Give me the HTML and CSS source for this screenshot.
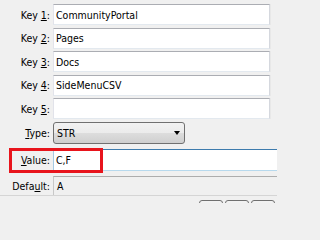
FILE: index.html
```html
<!DOCTYPE html>
<html>
<head>
<meta charset="utf-8">
<link rel="stylesheet" href="styles.css">
</head>
<body>
<div class="dialog">
  <div class="form">
    <div class="row">
      <div class="label">Key <u>1</u>:</div>
      <div class="field">CommunityPortal</div>
    </div>
    <div class="row">
      <div class="label">Key <u>2</u>:</div>
      <div class="field">Pages</div>
    </div>
    <div class="row">
      <div class="label">Key <u>3</u>:</div>
      <div class="field">Docs</div>
    </div>
    <div class="row">
      <div class="label">Key <u>4</u>:</div>
      <div class="field">SideMenuCSV</div>
    </div>
    <div class="row">
      <div class="label">Key <u>5</u>:</div>
      <div class="field"></div>
    </div>
    <div class="row row-type">
      <div class="label"><u>T</u>ype:</div>
      <div class="select">
        <span class="select-text">STR</span>
        <span class="arrow"></span>
      </div>
    </div>
    <div class="row row-value">
      <div class="label"><u>V</u>alue:</div>
      <div class="field field-focus">C,F</div>
    </div>
    <div class="row row-default">
      <div class="label">Defa<u>u</u>lt:</div>
      <div class="field field-readonly">A</div>
    </div>
  </div>
  <div class="footer">
    <div class="btn"></div>
    <div class="btn"></div>
    <div class="btn"></div>
  </div>
  <div class="highlight"></div>
</div>
</body>
</html>
```

FILE: styles.css
```css
html, body {
  margin: 0;
  padding: 0;
  background: #f0f0f0;
  overflow: hidden;
}

.dialog {
  position: relative;
  width: 277px;
  height: 203px;
  font-family: "DejaVu Sans Condensed", "Liberation Sans", sans-serif;
  font-size: 10.5px;
  color: #000;
}

.form {
  display: flex;
  flex-direction: column;
  padding-top: 4px;
}

.row {
  display: flex;
  align-items: center;
  height: 21px;
  margin-bottom: 2.5px;
}

.label {
  width: 50px;
  margin-right: 3px;
  text-align: right;
  white-space: nowrap;
}

.label u {
  text-underline-offset: 1px;
}

.field {
  box-sizing: border-box;
  height: 100%;
  width: 217px;
  background: #fff;
  border-top: 1px solid #abadb3;
  border-left: 1px solid #e2e3ea;
  border-right: 1px solid #d5d8de;
  border-bottom: 1px solid #e3e9ef;
  box-shadow: 1px 0 0 #e8e8e8;
  padding-left: 2px;
  display: flex;
  align-items: center;
  white-space: nowrap;
}

.row-type {
  height: 22px;
  margin-bottom: 5.5px;
}

.select {
  box-sizing: border-box;
  width: 132px;
  height: 100%;
  border: 1px solid #707070;
  border-radius: 3px;
  background: linear-gradient(#f2f2f2 0%, #ebebeb 50%, #dddddd 50%, #cfcfcf 100%);
  display: flex;
  align-items: center;
  justify-content: space-between;
  padding: 0 4px 0 3px;
}

.arrow {
  width: 0;
  height: 0;
  border-left: 3.5px solid transparent;
  border-right: 3.5px solid transparent;
  border-top: 4px solid #000;
  margin-top: 1px;
}

.row-value {
  height: 22px;
  margin-bottom: 5px;
}

.field-focus {
  width: 224px;
  border-top: 1px solid #3d7bad;
  border-left: 1px solid #a4c9e3;
  border-right: none;
  border-bottom: 1px solid #b7d9ed;
  box-shadow: none;
}

.row-default {
  height: 19px;
  margin-bottom: 0;
}

.field-readonly {
  width: 224px;
  background: #f0f0f0;
  border-top: 1px solid #adadad;
  border-left: 1px solid #c8c8c8;
  border-right: none;
  border-bottom: none;
  box-shadow: none;
  padding-left: 3px;
}

.footer {
  border-top: 1px solid #d5d5d5;
  display: flex;
  justify-content: flex-end;
  gap: 2px;
  padding: 4px 2px 0 0;
}

.btn {
  box-sizing: border-box;
  width: 24px;
  height: 20px;
  border: 1px solid #707070;
  border-radius: 3px;
  background: linear-gradient(#f2f2f2, #ebebeb);
}

.highlight {
  position: absolute;
  left: 9px;
  top: 148px;
  width: 94px;
  height: 25px;
  box-sizing: border-box;
  border: 3px solid #e8141c;
}
```
